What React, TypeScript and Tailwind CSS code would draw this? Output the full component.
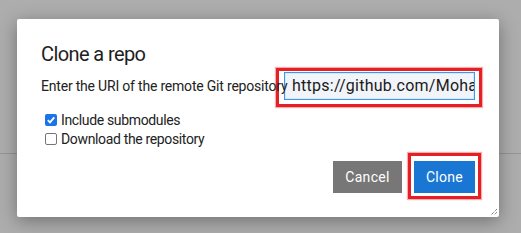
import React from "react";

export default function App() {
  return (
    <div
      className="relative w-[521px] h-[233px] overflow-hidden bg-[#adadad]"
      style={{ fontFamily: "Roboto, 'Noto Sans', sans-serif" }}
    >
      {/* background page line */}
      <div className="absolute left-0 right-0 top-[153px] h-px bg-[#959595]" />
      {/* dialog */}
      <div className="absolute left-[17px] top-[19px] w-[482px] h-[198px] bg-white rounded-[2px] shadow-[0_4px_18px_rgba(0,0,0,0.35)] px-6 pt-[22px] flex flex-col">
        <div className="text-[20px] leading-[26px] tracking-[-0.6px] text-[#1e1e1e]">Clone a repo</div>
        <div className="flex items-center mt-[5px] h-[28px]">
          <div className="relative z-10 w-[243px] h-[20px]">
            <div className="absolute left-0 top-0 whitespace-nowrap text-[14px] leading-[20px] tracking-[-0.2px] text-[#222]">
              Enter the URI of the remote Git repository
            </div>
          </div>
          <div className="relative">
            <div className="w-[191px] h-[28px] border border-[#3c95ee] bg-[#f1f4f8] shadow-[inset_0_0_0_1px_#d9e9f9] flex items-center pl-[7px] overflow-hidden whitespace-nowrap text-[16px] tracking-[0.25px] text-[#1a1a1a]">
              https://github.com/Mohammed
            </div>
            <div className="absolute left-[-8px] top-[-4px] w-[206px] h-[39px] border-[3px] border-[#e41f26] shadow-[0_0_1px_1px_rgba(240,120,120,0.6)] pointer-events-none" />
          </div>
        </div>
        <div className="mt-[14px] flex flex-col gap-[7px] pl-1 text-[14px] tracking-[-0.35px] text-[#222]">
          <label className="flex items-center gap-1 h-[12px]">
            <span className="w-[12px] h-[12px] rounded-[2px] bg-[#1a73e8] flex items-center justify-center">
              <svg width="10" height="10" viewBox="0 0 10 10">
                <path d="M1.8 5.2 L4 7.4 L8.3 2.4" stroke="white" strokeWidth="1.8" fill="none" />
              </svg>
            </span>
            Include submodules
          </label>
          <label className="flex items-center gap-1 h-[12px]">
            <span className="w-[12px] h-[12px] rounded-[2px] border border-[#767676] bg-white" />
            Download the repository
          </label>
        </div>
        <div className="mt-auto mb-6 flex justify-end gap-3">
          <button className="w-[69px] h-[32px] bg-[#777777] text-white text-[14px] tracking-[0.3px]">
            Cancel
          </button>
          <div className="relative">
            <button className="w-[61px] h-[32px] bg-[#1976d2] text-white text-[14px] tracking-[0.3px]">
              Clone
            </button>
            <div className="absolute left-[-6px] top-[-8px] w-[73px] h-[46px] border-[3px] border-[#e41f26] shadow-[0_0_1px_1px_rgba(240,120,120,0.6)] pointer-events-none" />
          </div>
        </div>
        {/* resize grip */}
        <svg className="absolute right-[1px] bottom-[1px]" width="8" height="8" viewBox="0 0 8 8">
          <path d="M7 1 L1 7 M7 4 L4 7" stroke="#555" strokeWidth="1" strokeDasharray="1 1" />
        </svg>
      </div>
    </div>
  );
}
